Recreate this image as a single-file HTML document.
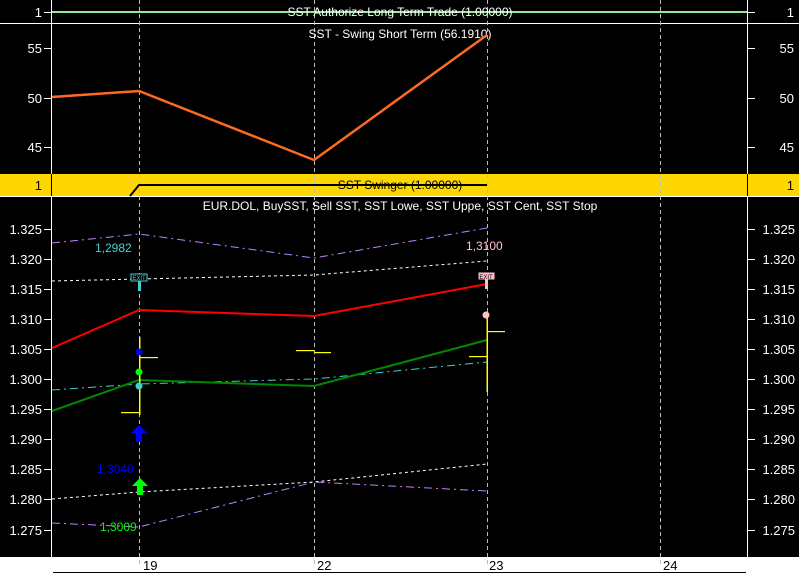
<!DOCTYPE html>
<html><head><style>
body{margin:0;background:#000;width:799px;height:587px;overflow:hidden}
svg{display:block;font-family:"Liberation Sans",sans-serif}
</style></head><body>
<svg width="799" height="587" viewBox="0 0 799 587">
<rect width="799" height="587" fill="#000"/>
<rect x="0" y="174" width="799" height="22" fill="#ffd700"/>
<rect x="0" y="557" width="799" height="30" fill="#fff"/>
<line x1="0" y1="23.5" x2="799" y2="23.5" stroke="#fff"/>
<line x1="0" y1="196.5" x2="799" y2="196.5" stroke="#fff"/>
<line x1="53" y1="572.5" x2="746" y2="572.5" stroke="#000"/>
<g stroke="#bbb" stroke-dasharray="4,3">
<line x1="139.5" y1="0" x2="139.5" y2="566"/><line x1="314.5" y1="0" x2="314.5" y2="566"/>
<line x1="487.5" y1="0" x2="487.5" y2="566"/><line x1="660.5" y1="0" x2="660.5" y2="566"/>
</g>
<g stroke="#fff"><line x1="51.5" y1="0" x2="51.5" y2="557"/><line x1="747.5" y1="0" x2="747.5" y2="557"/></g>
<line x1="51.5" y1="174" x2="51.5" y2="196" stroke="#000"/><line x1="747.5" y1="174" x2="747.5" y2="196" stroke="#000"/>
<g stroke="#fff">
<line x1="44" y1="12.5" x2="52" y2="12.5"/><line x1="747" y1="12.5" x2="755" y2="12.5"/>
<line x1="44" y1="48.5" x2="52" y2="48.5"/><line x1="747" y1="48.5" x2="755" y2="48.5"/>
<line x1="44" y1="98.5" x2="52" y2="98.5"/><line x1="747" y1="98.5" x2="755" y2="98.5"/>
<line x1="44" y1="147.5" x2="52" y2="147.5"/><line x1="747" y1="147.5" x2="755" y2="147.5"/>
</g>
<g fill="#fff" font-size="13" text-anchor="end">
<text x="42" y="17">1</text><text x="794" y="17">1</text>
<text x="42" y="53">55</text><text x="794" y="53">55</text>
<text x="42" y="103">50</text><text x="794" y="103">50</text>
<text x="42" y="152">45</text><text x="794" y="152">45</text>
</g>
<g fill="#000" font-size="13" text-anchor="end"><text x="42" y="190">1</text><text x="794" y="190">1</text></g>
<g fill="#fff" font-size="13" text-anchor="end">
<text x="42" y="234">1.325</text><text x="795" y="234">1.325</text>
<text x="42" y="264">1.320</text><text x="795" y="264">1.320</text>
<text x="42" y="294">1.315</text><text x="795" y="294">1.315</text>
<text x="42" y="324">1.310</text><text x="795" y="324">1.310</text>
<text x="42" y="354">1.305</text><text x="795" y="354">1.305</text>
<text x="42" y="384">1.300</text><text x="795" y="384">1.300</text>
<text x="42" y="414">1.295</text><text x="795" y="414">1.295</text>
<text x="42" y="444">1.290</text><text x="795" y="444">1.290</text>
<text x="42" y="474">1.285</text><text x="795" y="474">1.285</text>
<text x="42" y="504">1.280</text><text x="795" y="504">1.280</text>
<text x="42" y="535">1.275</text><text x="795" y="535">1.275</text>
</g>
<g stroke="#fff">
<line x1="44" y1="229.5" x2="52" y2="229.5"/><line x1="44" y1="259.5" x2="52" y2="259.5"/><line x1="44" y1="289.5" x2="52" y2="289.5"/><line x1="44" y1="319.5" x2="52" y2="319.5"/><line x1="44" y1="349.5" x2="52" y2="349.5"/><line x1="44" y1="379.5" x2="52" y2="379.5"/><line x1="44" y1="409.5" x2="52" y2="409.5"/><line x1="44" y1="439.5" x2="52" y2="439.5"/><line x1="44" y1="469.5" x2="52" y2="469.5"/><line x1="44" y1="499.5" x2="52" y2="499.5"/><line x1="44" y1="530.5" x2="52" y2="530.5"/>
<line x1="747" y1="229.5" x2="755" y2="229.5"/><line x1="747" y1="259.5" x2="755" y2="259.5"/><line x1="747" y1="289.5" x2="755" y2="289.5"/><line x1="747" y1="319.5" x2="755" y2="319.5"/><line x1="747" y1="349.5" x2="755" y2="349.5"/><line x1="747" y1="379.5" x2="755" y2="379.5"/><line x1="747" y1="409.5" x2="755" y2="409.5"/><line x1="747" y1="439.5" x2="755" y2="439.5"/><line x1="747" y1="469.5" x2="755" y2="469.5"/><line x1="747" y1="499.5" x2="755" y2="499.5"/><line x1="747" y1="530.5" x2="755" y2="530.5"/>
</g>
<line x1="52" y1="12" x2="747" y2="12" stroke="#90ee90" stroke-width="2"/>
<text x="400" y="16" fill="#fff" font-size="12" text-anchor="middle">SST Authorize Long Term Trade (1.00000)</text>
<text x="400" y="38" fill="#fff" font-size="12" text-anchor="middle">SST - Swing Short Term (56.1910)</text>
<polyline points="52,97 139,91 314,160 487,35" fill="none" stroke="#ff6a20" stroke-width="2.5"/>
<polyline points="130,196 139,185 487,185" fill="none" stroke="#000" stroke-width="2"/>
<text x="400" y="189" fill="#000" font-size="12" text-anchor="middle">SST Swinger (1.00000)</text>
<text x="400" y="210" fill="#fff" font-size="12" text-anchor="middle">EUR.DOL, BuySST, Sell SST, SST Lowe, SST Uppe, SST Cent, SST Stop</text>
<polyline points="52,243 139,234 314,258 487,228" fill="none" stroke="#c080ff" stroke-dasharray="8,4,2,4"/>
<polyline points="52,523 139,527 314,482 487,491" fill="none" stroke="#c080ff" stroke-dasharray="8,4,2,4"/>
<polyline points="52,281 139,279 314,275 487,261" fill="none" stroke="#fff" stroke-dasharray="3,3"/>
<polyline points="52,499 139,492 314,482 487,464" fill="none" stroke="#fff" stroke-dasharray="3,3"/>
<polyline points="52,390 139,384 314,379 487,362" fill="none" stroke="#40d0d0" stroke-dasharray="8,4,2,4"/>
<polyline points="52,348 139,310 314,316 487,284" fill="none" stroke="#f00" stroke-width="2"/>
<polyline points="52,411 139,380 314,386 487,340" fill="none" stroke="#080" stroke-width="2"/>
<g fill="#ff0">
<rect x="139" y="337" width="1.5" height="78"/><rect x="139" y="357" width="19" height="1.2"/><rect x="121" y="412" width="18" height="1.2"/>
<rect x="296" y="350" width="18" height="1.2"/><rect x="314" y="352" width="17" height="1.2"/>
<rect x="486.5" y="318" width="1.5" height="74"/><rect x="487" y="331" width="18" height="1.2"/><rect x="469" y="356" width="18" height="1.2"/>
</g>
<circle cx="139" cy="352" r="3.5" fill="#00f"/><circle cx="139" cy="372" r="3.5" fill="#0f0"/><circle cx="139" cy="386" r="3.5" fill="#40d0d0"/>
<circle cx="486" cy="315" r="3.5" fill="#ffc0cb"/>
<path d="M139,425 L147,433 L142,433 L142,442 L136,442 L136,433 L131,433Z" fill="#00f"/>
<path d="M140,478 L148,486 L143,486 L143,495 L137,495 L137,486 L132,486Z" fill="#0f0"/>
<rect x="131" y="274" width="16" height="7" fill="#000" stroke="#40d0d0"/><rect x="138" y="281" width="3" height="10" fill="#40d0d0"/>
<text x="139" y="280" fill="#40d0d0" font-size="6" text-anchor="middle">EXIT</text>
<rect x="479" y="273" width="15" height="6" fill="#ffc0cb" stroke="#ffc0cb"/><rect x="485" y="279" width="3" height="10" fill="#ffc0cb"/>
<text x="486" y="279" fill="#000" font-size="6" text-anchor="middle">EXIT</text>
<text x="95" y="252" fill="#40d0d0" font-size="12">1,2982</text>
<text x="97" y="473" fill="#00f" font-size="12">1,3040</text>
<text x="100" y="531" fill="#0f0" font-size="12">1,3009</text>
<text x="466" y="250" fill="#ffc0cb" font-size="12">1,3100</text>
<g fill="#000" font-size="13"><text x="143" y="570">19</text><text x="317" y="570">22</text><text x="489" y="570">23</text><text x="663" y="570">24</text></g>
</svg>
</body></html>
